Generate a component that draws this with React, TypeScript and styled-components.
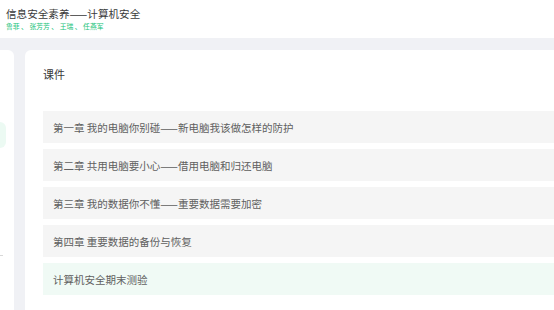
import React from "react";
import styled, { createGlobalStyle } from "styled-components";

const Global = createGlobalStyle`
  html, body { margin: 0; padding: 0; }
  body {
    width: 554px;
    height: 310px;
    overflow: hidden;
    background: #f0f1f5;
    font-family: "Noto Sans CJK SC", "Noto Sans", sans-serif;
  }
`;

const Header = styled.header`
  height: 38px;
  background: #ffffff;
  padding-left: 6px;
  box-sizing: border-box;
  display: flex;
  flex-direction: column;
  justify-content: flex-start;
  padding-top: 6px;
`;

const Title = styled.div`
  font-size: 10.6px;
  line-height: 15px;
  color: #3a3a3a;
  white-space: nowrap;
`;

const Authors = styled.div`
  font-size: 6.8px;
  line-height: 10px;
  color: #19c37a;
  white-space: nowrap;
`;

const Main = styled.div`
  display: flex;
  gap: 11px;
  padding-top: 12px;
  height: 260px;
`;

const Side = styled.aside`
  width: 14px;
  flex: none;
  background: #ffffff;
  border-radius: 0 6px 0 0;
  display: flex;
  flex-direction: column;
  padding-top: 72px;
  box-sizing: border-box;
`;

const SideItem = styled.div<{ $active?: boolean }>`
  width: 6px;
  height: 26px;
  border-radius: 0 6px 6px 0;
  background: ${(p) => (p.$active ? "#ecfaf3" : "transparent")};
`;

const SideDash = styled.div`
  width: 3px;
  height: 1px;
  margin-top: 107px;
  background: #d8d8d8;
`;

const Card = styled.section`
  flex: 1;
  min-width: 0;
  background: #ffffff;
  border-radius: 6px 0 0 0;
  padding: 16px 0 0 18px;
  box-sizing: border-box;
  overflow: hidden;
`;

const CardTitle = styled.div`
  font-size: 11px;
  line-height: 16px;
  color: #3a3a3a;
  margin-bottom: 29px;
`;

const List = styled.div`
  display: flex;
  flex-direction: column;
  gap: 6px;
`;

const Row = styled.div<{ $exam?: boolean }>`
  height: 32px;
  display: flex;
  align-items: center;
  padding-left: 10px;
  background: ${(p) => (p.$exam ? "#f0faf5" : "#f5f5f5")};
  font-size: 10.5px;
  color: #606060;
  white-space: nowrap;
`;

const chapters = [
  "第一章 我的电脑你别碰——新电脑我该做怎样的防护",
  "第二章 共用电脑要小心——借用电脑和归还电脑",
  "第三章 我的数据你不懂——重要数据需要加密",
  "第四章 重要数据的备份与恢复",
];

export default function App() {
  return (
    <>
      <Global />
      <Header>
        <Title>信息安全素养——计算机安全</Title>
        <Authors>鲁菲 、 张芳芳 、 王瑞 、 任燕军</Authors>
      </Header>
      <Main>
        <Side>
          <SideItem $active />
          <SideDash />
        </Side>
        <Card>
          <CardTitle>课件</CardTitle>
          <List>
            {chapters.map((c) => (
              <Row key={c}>{c}</Row>
            ))}
            <Row $exam>计算机安全期末测验</Row>
          </List>
        </Card>
      </Main>
    </>
  );
}
